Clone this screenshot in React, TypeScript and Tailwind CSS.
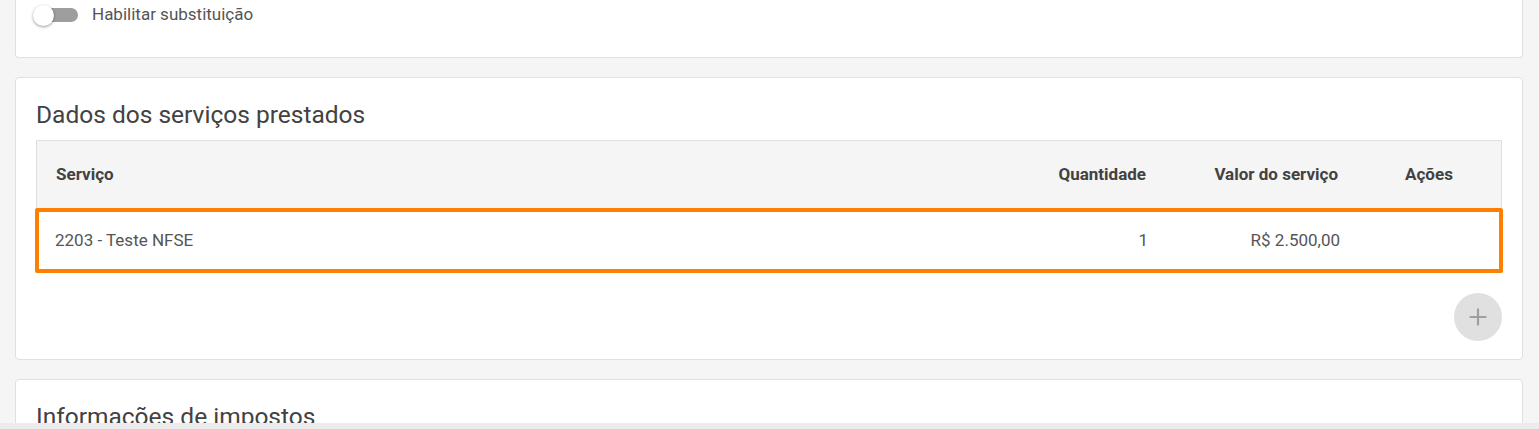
import { Plus } from "lucide-react";

const font = { fontFamily: "Roboto, 'Noto Sans', sans-serif" };

export default function App() {
  return (
    <div className="h-screen flex flex-col overflow-hidden bg-[#f5f5f5]" style={font}>
      <div className="flex-1 overflow-hidden pl-[15px] pr-[16px]">
        {/* Substituição card (top cut off) */}
        <div className="bg-white border border-t-0 border-[#e0e0e0] rounded-b-[4px] h-[58px] px-[17px]">
          <div className="flex items-center h-[29px] gap-[14px]">
            <div className="relative w-[45px] h-[24px] flex items-center">
              <div className="ml-[9px] w-[36px] h-[14px] rounded-full bg-[#9e9e9e]" />
              <div className="absolute left-0 top-[2px] w-[21px] h-[21px] rounded-full bg-white shadow-[0_1px_3px_rgba(0,0,0,0.4)]" />
            </div>
            <span className="text-[17px] text-[#555555]">Habilitar substituição</span>
          </div>
        </div>

        {/* Dados dos serviços prestados */}
        <div className="mt-[19px] bg-white border border-[#e0e0e0] rounded-[4px] px-[20px] pt-[22px] pb-[18px]">
          <h2 className="text-[24.5px] leading-[30px] text-[#424242] mb-[10px]">Dados dos serviços prestados</h2>

          <div className="border border-[#e0e0e0] border-b-0">
            <div className="grid grid-cols-[1fr_150px_192px_144px] items-center h-[67px] bg-[#f5f5f5] text-[17px] font-bold text-[#424242]">
              <div className="pl-[19px]">Serviço</div>
              <div className="text-right pr-[19px]">Quantidade</div>
              <div className="text-right pr-[19px]">Valor do serviço</div>
              <div className="text-center">Ações</div>
            </div>
          </div>
          <div className="-mx-[1px] grid grid-cols-[1fr_150px_192px_144px] items-center h-[65px] border-4 border-[#ff8000] rounded-[2px] text-[17px] text-[#555555]">
            <div className="pl-[16px]">2203 - Teste NFSE</div>
            <div className="text-right pr-[15px]">1</div>
            <div className="text-right pr-[15px]">R$ 2.500,00</div>
            <div />
          </div>

          <div className="flex justify-end mt-[20px]">
            <button type="button" className="w-[48px] h-[48px] rounded-full bg-[#e0e0e0] flex items-center justify-center text-[#9e9e9e]">
              <Plus size={26} strokeWidth={2} />
            </button>
          </div>
        </div>

        {/* Informações de impostos */}
        <div className="mt-[19px] bg-white border border-[#e0e0e0] rounded-[4px] px-[20px] pt-[22px] pb-[18px]">
          <h2 className="text-[24.5px] leading-[30px] text-[#424242]">Informações de impostos</h2>
        </div>
      </div>
      <div className="h-[6px] bg-[#ececec]" />
    </div>
  );
}
